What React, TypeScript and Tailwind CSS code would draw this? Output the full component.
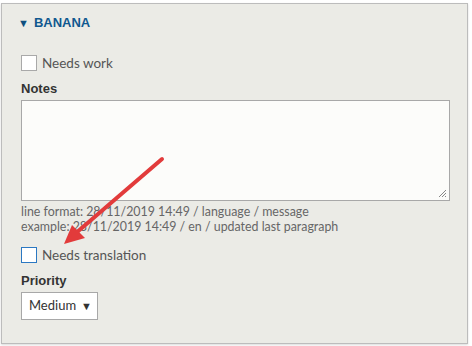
const body = { fontFamily: "Lato, 'Open Sans', sans-serif" };
const label = { fontFamily: "'Liberation Sans', Arial, sans-serif" };

const CheckRow = ({ text, focused }: { text: string; focused?: boolean }) => (
  <label className="flex items-center gap-[5px] h-4">
    <span
      className={
        "w-4 h-4 bg-white border " +
        (focused ? "border-[#2b78c2]" : "border-[#a9a9a9]")
      }
    />
    <span className="text-[13.5px] leading-4 text-[#555]" style={body}>
      {text}
    </span>
  </label>
);

const App = () => {
  return (
    <div className="relative w-[472px] h-[346px] bg-white overflow-hidden">
      <div className="ml-px mt-[3px] w-[467px] h-[341px] border border-[#bcbcbc] bg-[#ebebe6] shadow-[0_1px_2px_rgba(0,0,0,0.15)]">
        <div className="pl-4 pt-[11px] flex items-center gap-[5px]" style={label}>
          <span className="text-[11px] text-[#0f4f80] leading-4">▼</span>
          <span className="text-[13px] font-bold leading-4 text-[#10588f]">BANANA</span>
        </div>

        <div className="pl-[19px] pr-[17px]">
          <div className="mt-[24px]">
            <CheckRow text="Needs work" />
          </div>

          <div className="mt-[10px] text-[13px] font-bold leading-4 text-[#333]" style={label}>
            Notes
          </div>
          <div className="mt-[3px] relative w-[429px] h-[101px] bg-[#fcfcfa] border border-[#a8a8a8]">
            <svg className="absolute right-[2px] bottom-[2px]" width="9" height="9" viewBox="0 0 9 9">
              <path d="M8 1 L1 8 M8 4 L4 8 M8 7 L7 8" stroke="#888" strokeWidth="1" />
            </svg>
          </div>

          <div className="mt-[3px] text-[12.4px] leading-[15px] text-[#666]" style={body}>
            <div>line format: 28/11/2019 14:49 / language / message</div>
            <div>example: 28/11/2019 14:49 / en / updated last paragraph</div>
          </div>

          <div className="mt-[13px]">
            <CheckRow text="Needs translation" focused />
          </div>

          <div className="mt-[10px] text-[13px] font-bold leading-4 text-[#333]" style={label}>
            Priority
          </div>
          <div className="mt-[3px] w-[77px] h-[28px] bg-white border border-[#a8a8a8] flex items-center justify-between pl-[7px] pr-[5px]">
            <span className="text-[13px] text-[#333]" style={body}>Medium</span>
            <span className="text-[11px] text-[#333]" style={label}>▼</span>
          </div>
        </div>
      </div>

      <svg className="absolute left-0 top-0 pointer-events-none" width="472" height="346">
        <line x1="162" y1="159" x2="76" y2="233" stroke="#e23b3b" strokeWidth="4" strokeLinecap="round" />
        <polygon points="64,244 72,225 85,238" fill="#e23b3b" />
      </svg>
    </div>
  );
};

export default App;
